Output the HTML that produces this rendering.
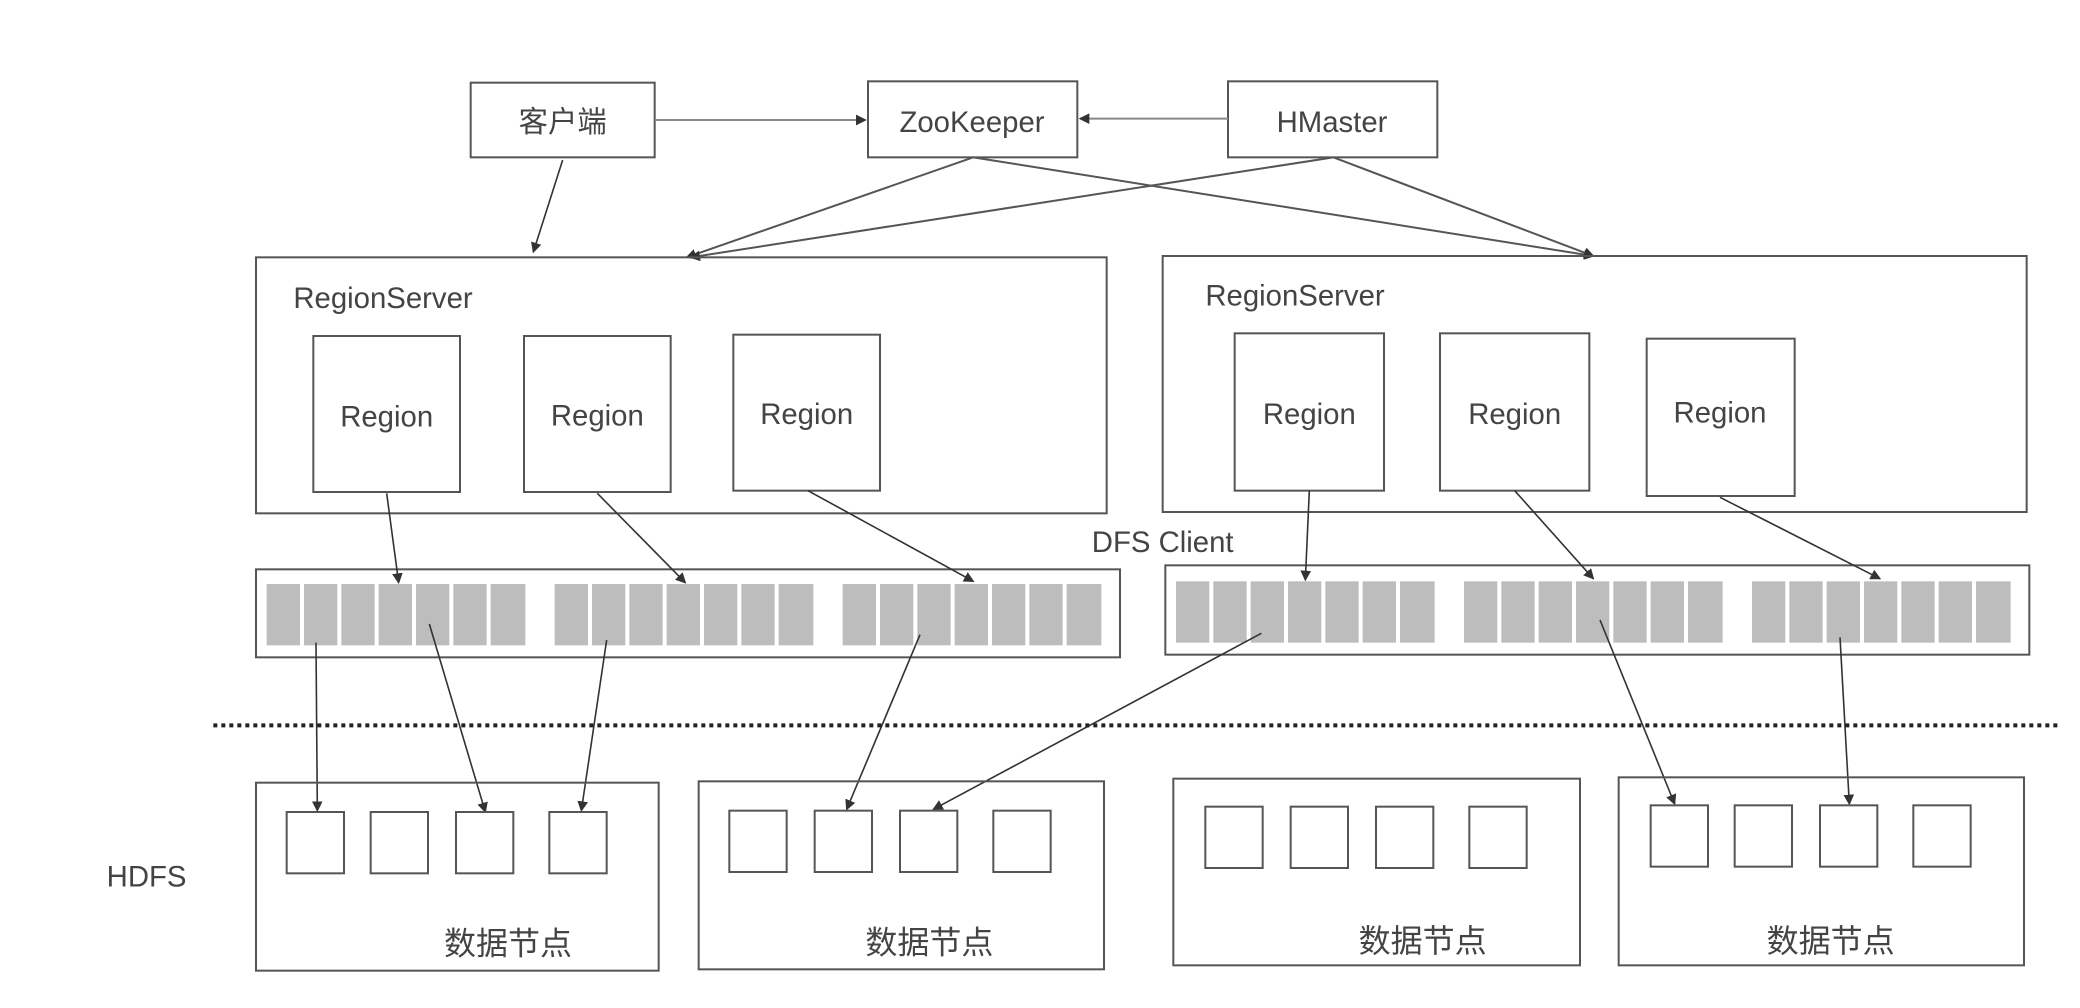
<!DOCTYPE html>
<html><head><meta charset="utf-8"><style>html,body{margin:0;padding:0;background:#fff;}svg{display:block}</style></head>
<body>
<svg width="2080" height="1008" viewBox="0 0 1560 756" xmlns="http://www.w3.org/2000/svg" font-family="Liberation Sans, Noto Sans CJK SC, sans-serif" fill="none" stroke="#555" stroke-width="1.5">
<defs>
<marker id="a" markerWidth="8" markerHeight="8" refX="7" refY="4" orient="auto" markerUnits="userSpaceOnUse"><path d="M0,0 L8,4 L0,8 z" fill="#333" stroke="none"/></marker>
<g id="blk" fill="#bdbdbd" stroke="none">
<rect x="0" y="0" width="25" height="46"/><rect x="28" y="0" width="25" height="46"/><rect x="56" y="0" width="25" height="46"/><rect x="84" y="0" width="25" height="46"/><rect x="112" y="0" width="25" height="46"/><rect x="140" y="0" width="25" height="46"/><rect x="168" y="0" width="26" height="46"/>
</g>
</defs>
<!-- top boxes -->
<rect x="353" y="62" width="138" height="56"/>
<rect x="651" y="61" width="157" height="57"/>
<rect x="921" y="61" width="157" height="57"/>
<g fill="#444" stroke="none" font-size="22">
<text x="422" y="99" text-anchor="middle">客户端</text>
<text x="729" y="99" text-anchor="middle">ZooKeeper</text>
<text x="999" y="99" text-anchor="middle">HMaster</text>
</g>
<g stroke="#888"><line x1="491" y1="90" x2="649" y2="90" marker-end="url(#a)"/>
<line x1="921" y1="89" x2="810" y2="89" marker-end="url(#a)"/></g>
<line x1="422" y1="120" x2="400" y2="189" marker-end="url(#a)" stroke="#333" stroke-width="1.2"/>
<line x1="730" y1="118" x2="515" y2="193" marker-end="url(#a)"/>
<line x1="1000" y1="118" x2="518" y2="193" marker-end="url(#a)"/>
<line x1="730" y1="118" x2="1195" y2="192" marker-end="url(#a)"/>
<line x1="1000" y1="118" x2="1195" y2="192" marker-end="url(#a)"/>
<!-- region servers -->
<rect x="192" y="193" width="638" height="192"/>
<rect x="872" y="192" width="648" height="192"/>
<g fill="#444" stroke="none" font-size="22">
<text x="220" y="231">RegionServer</text>
<text x="904" y="229">RegionServer</text>
</g>
<rect x="235" y="252" width="110" height="117"/>
<rect x="393" y="252" width="110" height="117"/>
<rect x="550" y="251" width="110" height="117"/>
<rect x="926" y="250" width="112" height="118"/>
<rect x="1080" y="250" width="112" height="118"/>
<rect x="1235" y="254" width="111" height="118"/>
<g fill="#444" stroke="none" font-size="22" text-anchor="middle">
<text x="290" y="320">Region</text><text x="448" y="319">Region</text><text x="605" y="318">Region</text>
<text x="982" y="318">Region</text><text x="1136" y="318">Region</text><text x="1290" y="317">Region</text>
<text x="872" y="414">DFS Client</text>
</g>
<!-- DFS client bars -->
<rect x="192" y="427" width="648" height="66"/>
<rect x="874" y="424" width="648" height="67"/>
<use href="#blk" x="200" y="438"/><use href="#blk" x="416" y="438"/><use href="#blk" x="632" y="438"/>
<use href="#blk" x="882" y="436"/><use href="#blk" x="1098" y="436"/><use href="#blk" x="1314" y="436"/>
<g stroke="#333" stroke-width="1.2">
<line x1="290" y1="370" x2="299" y2="437" marker-end="url(#a)"/>
<line x1="448" y1="370" x2="514" y2="437" marker-end="url(#a)"/>
<line x1="606" y1="368" x2="730" y2="436" marker-end="url(#a)"/>
<line x1="982" y1="368" x2="979" y2="435" marker-end="url(#a)"/>
<line x1="1136" y1="368" x2="1195" y2="434" marker-end="url(#a)"/>
<line x1="1290" y1="373" x2="1410" y2="434" marker-end="url(#a)"/>
<line x1="237" y1="482" x2="238" y2="608" marker-end="url(#a)"/>
<line x1="322" y1="468" x2="364" y2="609" marker-end="url(#a)"/>
<line x1="455" y1="480" x2="436" y2="608" marker-end="url(#a)"/>
<line x1="690" y1="476" x2="635" y2="607" marker-end="url(#a)"/>
<line x1="946" y1="475" x2="700" y2="607" marker-end="url(#a)"/>
<line x1="1200" y1="465" x2="1256" y2="603" marker-end="url(#a)"/>
<line x1="1380" y1="478" x2="1387" y2="603" marker-end="url(#a)"/>
</g>
<!-- dotted line -->
<line x1="160" y1="544" x2="1545" y2="544" stroke="#222" stroke-width="3" stroke-dasharray="3 3"/>
<!-- HDFS -->
<text x="80" y="665" fill="#444" stroke="none" font-size="22">HDFS</text>
<rect x="192" y="587" width="302" height="141"/>
<rect x="524" y="586" width="304" height="141"/>
<rect x="880" y="584" width="305" height="140"/>
<rect x="1214" y="583" width="304" height="141"/>
<g>
<rect x="215" y="609" width="43" height="46"/><rect x="278" y="609" width="43" height="46"/><rect x="342" y="609" width="43" height="46"/><rect x="412" y="609" width="43" height="46"/>
<rect x="547" y="608" width="43" height="46"/><rect x="611" y="608" width="43" height="46"/><rect x="675" y="608" width="43" height="46"/><rect x="745" y="608" width="43" height="46"/>
<rect x="904" y="605" width="43" height="46"/><rect x="968" y="605" width="43" height="46"/><rect x="1032" y="605" width="43" height="46"/><rect x="1102" y="605" width="43" height="46"/>
<rect x="1238" y="604" width="43" height="46"/><rect x="1301" y="604" width="43" height="46"/><rect x="1365" y="604" width="43" height="46"/><rect x="1435" y="604" width="43" height="46"/>
</g>
<g fill="#444" stroke="none" font-size="24" text-anchor="middle">
<text x="381" y="716">数据节点</text><text x="697" y="715">数据节点</text><text x="1067" y="714">数据节点</text><text x="1373" y="714">数据节点</text>
</g>
</svg>
</body></html>
